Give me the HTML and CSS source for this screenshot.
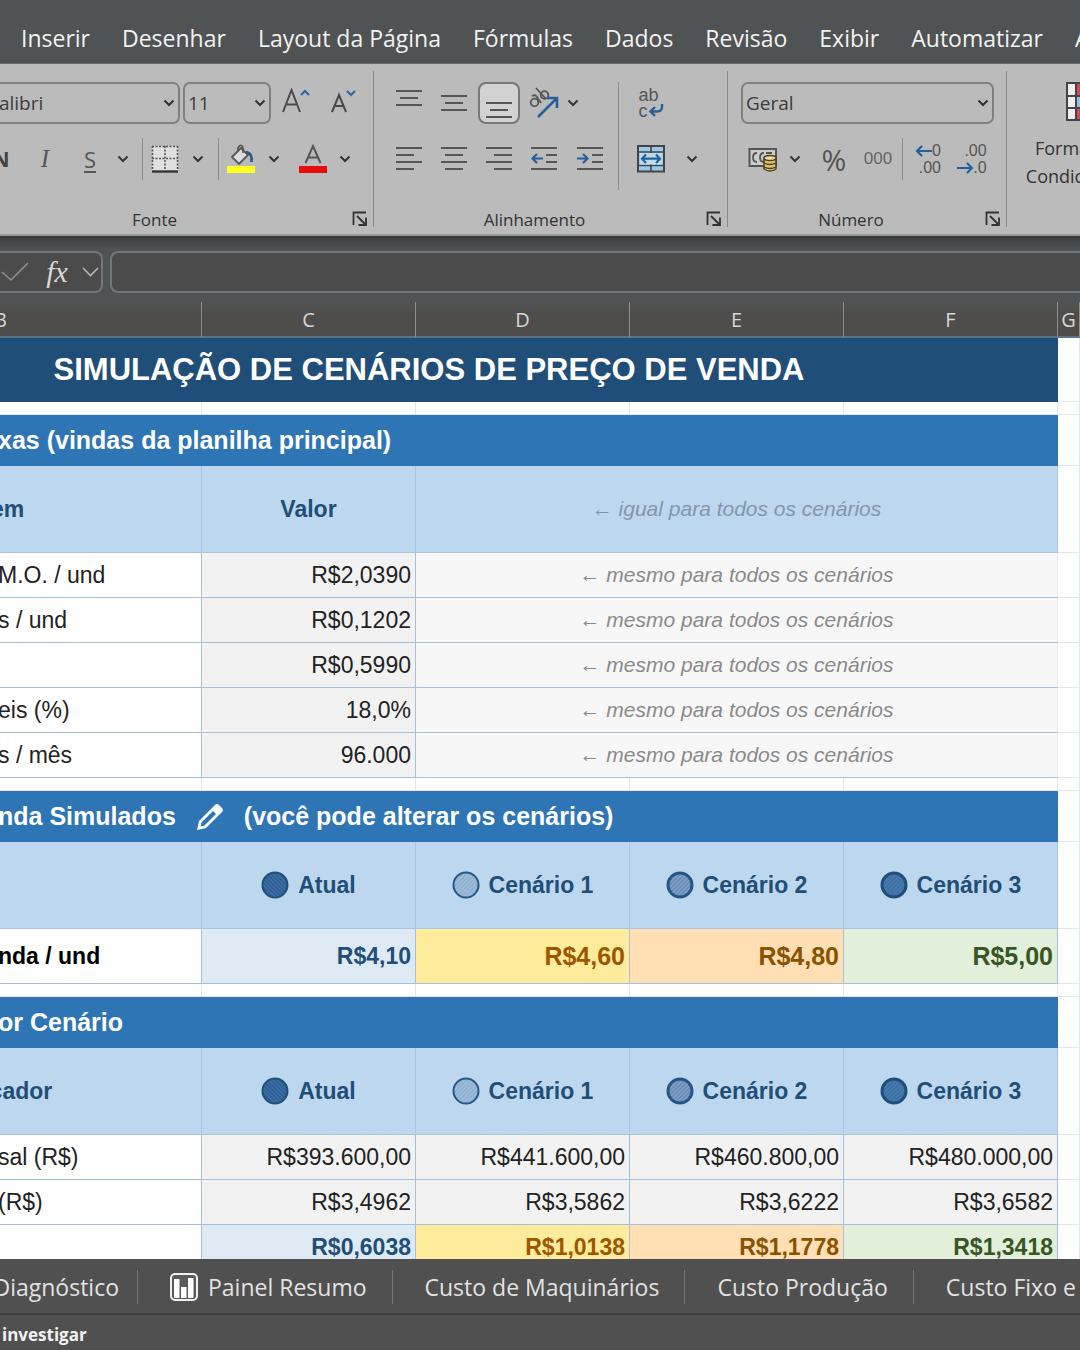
FILE: index.html
```html
<!DOCTYPE html>
<html lang="pt-BR">
<head>
<meta charset="utf-8">
<meta name="viewport" content="width=device-width, initial-scale=1">
<title>Simulação de Cenários</title>
<link rel="stylesheet" href="styles.css">
</head>
<body>
<svg class="defs" width="0" height="0" aria-hidden="true">
  <defs>
    <pattern id="hatch" width="3" height="3" patternUnits="userSpaceOnUse" patternTransform="rotate(45)"><path d="M0 0V3" stroke="#1f4e79" stroke-width="1" opacity=".55"/></pattern>
    <pattern id="hatch-back" width="3" height="3" patternUnits="userSpaceOnUse" patternTransform="rotate(-45)"><path d="M0 0V3" stroke="#8fb0d4" stroke-width="1" opacity=".5"/></pattern>
    <pattern id="hatch-light" width="3" height="3" patternUnits="userSpaceOnUse" patternTransform="rotate(45)"><path d="M0 0V3" stroke="#5c86b0" stroke-width="1" opacity=".5"/></pattern>
    <symbol id="chev" viewBox="0 0 12 8"><path d="M1.500 1.500L6 6L10.500 1.500" fill="none" stroke="currentColor" stroke-width="2"/></symbol>
    <symbol id="launch" viewBox="0 0 16 16"><path d="M1.500 14V1.500H14M5 5L13 13M14 6.500V14H6.500" fill="none" stroke="#333" stroke-width="1.800"/></symbol>
    <symbol id="c0" viewBox="0 0 28 28"><circle cx="14" cy="14" r="12.500" fill="#2d5f96"/><circle cx="14" cy="14" r="12.500" fill="url(#hatch-back)" stroke="#1f4e79" stroke-width="2"/></symbol>
    <symbol id="c1" viewBox="0 0 28 28"><circle cx="14" cy="14" r="12.500" fill="#9abbd8"/><circle cx="14" cy="14" r="12.500" fill="url(#hatch-light)" stroke="#265685" stroke-width="2"/></symbol>
    <symbol id="c2" viewBox="0 0 28 28"><circle cx="14" cy="14" r="12" fill="#7c9cc6"/><circle cx="14" cy="14" r="12" fill="url(#hatch)" stroke="#265685" stroke-width="3"/></symbol>
    <symbol id="c3" viewBox="0 0 28 28"><circle cx="14" cy="14" r="12" fill="#4579ab"/><circle cx="14" cy="14" r="12" fill="url(#hatch)" stroke="#1f4e79" stroke-width="3"/></symbol>
  </defs>
</svg>

<nav class="menu">
  <a href="#">Inserir</a><a href="#">Desenhar</a><a href="#">Layout da Página</a><a href="#">Fórmulas</a><a href="#">Dados</a><a href="#">Revisão</a><a href="#">Exibir</a><a href="#">Automatizar</a><a href="#">Ajuda</a>
</nav>

<div class="ribbon">
  <section class="group font">
    <div class="row">
      <div class="pick family"><select aria-label="Fonte"><option>Calibri</option></select><svg class="chev"><use href="#chev"/></svg></div>
      <div class="pick size"><select aria-label="Tamanho"><option>11</option></select><svg class="chev"><use href="#chev"/></svg></div>
      <button class="wide" aria-label="Aumentar fonte"><svg width="30" height="30"><path d="M2 24L10.500 2L19 24M5 16.500H16" fill="none" stroke="#4a4a4a" stroke-width="2"/><path d="M20 7L24 3L28 7" fill="none" stroke="#2a6aa8" stroke-width="2.200"/></svg></button>
      <button class="wide" aria-label="Diminuir fonte"><svg width="28" height="30"><path d="M3 24L10 7L17 24M5.500 18H14.500" fill="none" stroke="#4a4a4a" stroke-width="2"/><path d="M18 3L22 7L26 3" fill="none" stroke="#2a6aa8" stroke-width="2.200"/></svg></button>
    </div>
    <div class="tools font-tools">
      <button class="bold">N</button>
      <button class="italic">I</button>
      <button class="under">S</button>
      <button aria-label="Tipos de sublinhado"><svg class="chev"><use href="#chev"/></svg></button>
      <i class="sep"></i>
      <button aria-label="Bordas"><svg width="28" height="28"><path d="M1 1H27V26H1Z" fill="#e0e0e0"/><path d="M1 1.500H27M1.500 1V25M26.500 1V25M14 1V25M1 13.500H27" stroke="#555" stroke-width="1.600" stroke-dasharray="2 1.500"/><path d="M1 26.500H27" stroke="#333" stroke-width="2.400"/></svg></button>
      <button aria-label="Mais bordas"><svg class="chev"><use href="#chev"/></svg></button>
      <i class="sep"></i>
      <button aria-label="Cor de preenchimento"><svg width="30" height="30"><path d="M6 13L15 4L22 11L13 20Z" fill="#ddd" stroke="#555" stroke-width="1.800"/><path d="M12 7C11 2 16 -1 17 4V9" fill="none" stroke="#555" stroke-width="1.600"/><path d="M20 8C25 9 26 12 25.500 18" fill="none" stroke="#2c5a88" stroke-width="2.600"/><path d="M1 22H29V29H1Z" fill="#ff2"/></svg></button>
      <button aria-label="Mais cores"><svg class="chev"><use href="#chev"/></svg></button>
      <button aria-label="Cor da fonte"><svg width="30" height="30"><path d="M7.500 19L15 2L22.500 19M10 13.500H20" fill="none" stroke="#555" stroke-width="2"/><path d="M1 22H29V29H1Z" fill="#e80c0c"/></svg></button>
      <button aria-label="Mais cores da fonte"><svg class="chev"><use href="#chev"/></svg></button>
    </div>
    <footer><span>Fonte</span><button aria-label="Configurações de fonte"><svg width="16" height="16"><use href="#launch"/></svg></button></footer>
  </section>

  <section class="group align">
    <div class="blocks">
      <div class="block">
        <div class="tools align-tools">
          <button aria-label="Alinhar em cima"><svg class="lines" viewBox="0 0 26 30"><path d="M0 3H26M4 10H22M0 17H26"/></svg></button>
          <button aria-label="Alinhar no meio"><svg class="lines" viewBox="0 0 26 30"><path d="M0 8H26M4 15H22M0 22H26"/></svg></button>
          <button class="on" aria-label="Alinhar embaixo"><svg class="lines" viewBox="0 0 26 30"><path d="M0 15H26M4 22H22M0 29H26"/></svg></button>
          <button aria-label="Orientação"><svg width="32" height="32" viewBox="0 0 32 32"><g fill="none" stroke="#555" stroke-width="1.800"><circle cx="6.500" cy="15.500" r="3.800"/><path d="M4 9Q7 7 9 10L13 16"/><path d="M8 1L18 12"/><circle cx="16.500" cy="8" r="3.800"/></g><path d="M10 30L28 12M19 11H29V21" fill="none" stroke="#24619a" stroke-width="2.600"/></svg></button>
          <button aria-label="Mais orientações"><svg class="chev"><use href="#chev"/></svg></button>
        </div>
        <div class="tools align-tools">
          <button aria-label="Alinhar à esquerda"><svg class="lines" viewBox="0 0 26 30"><path d="M0 4H26M0 11H18M0 18H26M0 25H18"/></svg></button>
          <button aria-label="Centralizar"><svg class="lines" viewBox="0 0 26 30"><path d="M0 4H26M4 11H22M0 18H26M4 25H22"/></svg></button>
          <button aria-label="Alinhar à direita"><svg class="lines" viewBox="0 0 26 30"><path d="M0 4H26M8 11H26M0 18H26M8 25H26"/></svg></button>
          <button aria-label="Diminuir recuo"><svg class="lines" viewBox="0 0 26 30"><path d="M0 4H26M15 11H26M15 18H26M0 25H26"/><path class="blue" d="M12 14.500H2M6 10L1.500 14.500L6 19"/></svg></button>
          <button aria-label="Aumentar recuo"><svg class="lines" viewBox="0 0 26 30"><path d="M0 4H26M15 11H26M15 18H26M0 25H26"/><path class="blue" d="M0 14.500H10M6 10L10.500 14.500L6 19"/></svg></button>
        </div>
      </div>
      <i class="sep"></i>
      <div class="block">
        <div class="tools wrap-tools"><button class="wrap" aria-label="Quebrar texto"><span>ab</span><span>c<svg width="16" height="14"><path d="M14 0V3Q14 7.500 9 7.500H3M7 3L2.500 7.500L7 12" fill="none" stroke="#24619a" stroke-width="2.400"/></svg></span></button></div>
        <div class="tools wrap-tools">
          <button aria-label="Mesclar e centralizar"><svg width="28" height="28"><path d="M1 1H27V26.500H1Z" fill="#9cc9ea" stroke="#444" stroke-width="2"/><path d="M14 1V27M1 7H27M1 20.500H27" stroke="#444" stroke-width="1.600"/><path d="M3 8H25V19.500H3Z" fill="#b9dcf3"/><path d="M5 13.700H23M9 9.500L5 13.700L9 18M19 9.500L23 13.700L19 18" fill="none" stroke="#24619a" stroke-width="2.200"/></svg></button>
          <button aria-label="Mais opções de mesclagem"><svg class="chev"><use href="#chev"/></svg></button>
        </div>
      </div>
    </div>
    <footer><span>Alinhamento</span><button aria-label="Configurações de alinhamento"><svg width="16" height="16"><use href="#launch"/></svg></button></footer>
  </section>

  <section class="group number">
    <div class="pick format"><select aria-label="Formato de número"><option>Geral</option></select><svg class="chev"><use href="#chev"/></svg></div>
    <div class="tools number-tools">
      <button aria-label="Formato de contabilização"><svg width="30" height="28"><path d="M1.500 4H28V21H1.500Z" fill="#ccc" stroke="#555" stroke-width="2"/><path d="M9 8Q5 8 5 12.500T9 17M16 8Q12 8 12 12.500T16 17M18 8H24" fill="none" stroke="#555" stroke-width="1.800"/><path d="M16 13V24Q22 28 28 24V13Z" fill="#dfc06a" stroke="#4b4226" stroke-width="1.500"/><ellipse cx="22" cy="13" rx="6" ry="2.500" fill="#f0dc96" stroke="#4b4226" stroke-width="1.500"/><path d="M16 18Q22 21 28 18M16 22Q22 25 28 22" fill="none" stroke="#4b4226" stroke-width="1.300"/></svg></button>
      <button aria-label="Mais moedas"><svg class="chev"><use href="#chev"/></svg></button>
      <button class="percent">%</button>
      <button class="thousands">000</button>
      <i class="sep"></i>
      <button class="dec" aria-label="Aumentar casas decimais"><span><svg width="17" height="12"><path d="M17 6H2M7 1L2 6L7 11" fill="none" stroke="#24619a" stroke-width="2.200"/></svg>0</span><span>.00</span></button>
      <button class="dec" aria-label="Diminuir casas decimais"><span>.00</span><span><svg width="16" height="12"><path d="M0 6H15M10 1L15 6L10 11" fill="none" stroke="#24619a" stroke-width="2.200"/></svg>.0</span></button>
    </div>
    <footer><span>Número</span><button aria-label="Configurações de número"><svg width="16" height="16"><use href="#launch"/></svg></button></footer>
  </section>

  <section class="group style">
    <button class="conditional">
      <svg class="grid-icon" width="38" height="40"><path d="M1 1H37V38H1Z" fill="#eee"/><path d="M10 1H28V14H10ZM10 26H28V38H10Z" fill="#d9475a"/><path d="M10 14H24V26H10Z" fill="#8cc4ee"/><path d="M1 1H37V38H1ZM10 1V38M1 14H37M1 26H37M28 1V38" fill="none" stroke="#444" stroke-width="2"/></svg>
      <span>Formatação</span><span class="more">Condicional <svg class="chev"><use href="#chev"/></svg></span>
    </button>
  </section>
</div>

<div class="formula">
  <div class="fx">
    <button aria-label="Inserir"><svg width="28" height="20"><path d="M1 10L10 18L27 1" fill="none" stroke="#8f8f8f" stroke-width="1.600"/></svg></button>
    <button class="fn">fx</button>
    <button aria-label="Mais funções"><svg width="17" height="10"><path d="M1 1L8.500 8.500L16 1" fill="none" stroke="#b5b5b5" stroke-width="1.600"/></svg></button>
  </div>
  <input type="text" aria-label="Barra de fórmulas">
</div>

<main class="sheet">
<table>
  <colgroup><col class="col-b"><col class="col"><col class="col"><col class="col"><col class="col"><col></colgroup>
  <thead><tr><th>B</th><th>C</th><th>D</th><th>E</th><th>F</th><th>G</th></tr></thead>
  <tbody>
    <tr class="title"><th colspan="5">SIMULAÇÃO DE CENÁRIOS DE PREÇO DE VENDA</th><td></td></tr>
    <tr class="gap"><td></td><td></td><td></td><td></td><td></td><td></td></tr>
    <tr class="band"><th colspan="5">xas (vindas da planilha principal)</th><td></td></tr>
    <tr class="heads"><th>Item</th><th>Valor</th><td class="note" colspan="3">← igual para todos os cenários</td><td></td></tr>
    <tr class="line"><th>M.O. / und</th><td>R$2,0390</td><td class="note" colspan="3">← mesmo para todos os cenários</td><td></td></tr>
    <tr class="line"><th>s / und</th><td>R$0,1202</td><td class="note" colspan="3">← mesmo para todos os cenários</td><td></td></tr>
    <tr class="line"><th></th><td>R$0,5990</td><td class="note" colspan="3">← mesmo para todos os cenários</td><td></td></tr>
    <tr class="line"><th>eis (%)</th><td>18,0%</td><td class="note" colspan="3">← mesmo para todos os cenários</td><td></td></tr>
    <tr class="line"><th>s / mês</th><td>96.000</td><td class="note" colspan="3">← mesmo para todos os cenários</td><td></td></tr>
    <tr class="gap"><td></td><td></td><td></td><td></td><td></td><td></td></tr>
    <tr class="band"><th colspan="5"><span class="label">nda Simulados <svg width="30" height="30"><path d="M2 28L4 19L20 3Q22 1 24.500 3.500L26.500 5.500Q29 8 27 10L11 26Z" fill="#fff"/><path d="M6.500 20.500L18 9L21 12L9.500 23.500L5.500 24.500Z" fill="#2e75b6"/></svg> (você pode alterar os cenários)</span></th><td></td></tr>
    <tr class="heads"><th></th><th><span class="tag"><svg><use href="#c0"/></svg>Atual</span></th><th><span class="tag"><svg><use href="#c1"/></svg>Cenário 1</span></th><th><span class="tag"><svg><use href="#c2"/></svg>Cenário 2</span></th><th><span class="tag"><svg><use href="#c3"/></svg>Cenário 3</span></th><td></td></tr>
    <tr class="line price"><th>nda / und</th><td class="now">R$4,10</td><td class="one">R$4,60</td><td class="two">R$4,80</td><td class="three">R$5,00</td><td></td></tr>
    <tr class="gap"><td></td><td></td><td></td><td></td><td></td><td></td></tr>
    <tr class="band"><th colspan="5">or Cenário</th><td></td></tr>
    <tr class="heads"><th>Indicador</th><th><span class="tag"><svg><use href="#c0"/></svg>Atual</span></th><th><span class="tag"><svg><use href="#c1"/></svg>Cenário 1</span></th><th><span class="tag"><svg><use href="#c2"/></svg>Cenário 2</span></th><th><span class="tag"><svg><use href="#c3"/></svg>Cenário 3</span></th><td></td></tr>
    <tr class="line"><th>sal (R$)</th><td>R$393.600,00</td><td>R$441.600,00</td><td>R$460.800,00</td><td>R$480.000,00</td><td></td></tr>
    <tr class="line"><th>(R$)</th><td>R$3,4962</td><td>R$3,5862</td><td>R$3,6222</td><td>R$3,6582</td><td></td></tr>
    <tr class="line"><th></th><td class="now">R$0,6038</td><td class="one">R$1,0138</td><td class="two">R$1,1778</td><td class="three">R$1,3418</td><td></td></tr>
  </tbody>
</table>
</main>

<nav class="tabs">
  <button class="first">Diagnóstico</button>
  <button><svg width="28" height="28"><rect x="1" y="1" width="26" height="26" rx="4" fill="#5a5a5a" stroke="#f0f0f0" stroke-width="2"/><path d="M4 6H9.500V25H4ZM11 14H16.500V25H11ZM18 5H23.500V25H18Z" fill="#fff"/></svg>Painel Resumo</button>
  <button>Custo de Maquinários</button>
  <button>Custo Produção</button>
  <button>Custo Fixo e</button>
</nav>
<div class="status">investigar</div>
</body>
</html>
```

FILE: styles.css
```css
* { box-sizing: border-box; }

body {
  margin: 0;
  height: 100vh;
  display: flex;
  flex-direction: column;
  overflow: hidden;
  background: #505354;
  color: #333;
  font-family: "Open Sans", "Noto Sans", sans-serif;
}

button {
  display: flex;
  align-items: center;
  justify-content: center;
  padding: 0;
  border: 0;
  background: none;
  color: inherit;
  font: inherit;
  white-space: nowrap;
}

svg { display: block; flex: none; }
.defs { position: absolute; }
.chev { width: 12px; height: 8px; color: #333; }

/* Menu */
.menu {
  flex: none;
  display: flex;
  align-items: center;
  gap: 32px;
  height: 64px;
  padding: 13px 0 0 21px;
  overflow: hidden;
  background: #505354;
  border-bottom: 1px solid #6c6f70;
  font-size: 23px;
}
.menu a { color: #f2f2f2; text-decoration: none; white-space: nowrap; }

/* Ribbon */
.ribbon {
  flex: none;
  display: flex;
  height: 172px;
  padding-top: 7px;
  overflow: hidden;
  background: #bbbbbb;
  border-bottom: 2px solid #9a9c9c;
}
.group {
  flex: none;
  display: flex;
  flex-direction: column;
  height: 156px;
  padding-top: 11px;
  border-right: 1px solid #8c8c8c;
}
.font { width: 406px; margin-left: -32px; }
.align { width: 354px; }
.number { width: 279px; }
.style { border: 0; }

.row { display: flex; height: 42px; margin-bottom: 14px; gap: 3px; }
.pick {
  display: grid;
  align-items: center;
  height: 42px;
  border: 2px solid #808080;
  border-radius: 7px;
}
.pick select {
  grid-area: 1 / 1;
  width: 100%;
  height: 100%;
  padding: 0 0 0 3px;
  border: 0;
  appearance: none;
  background: none;
  color: #3c3c3c;
  font: 19px "Open Sans", "Noto Sans", sans-serif;
}
.pick .chev { grid-area: 1 / 1; justify-self: end; margin-right: 3px; pointer-events: none; }
.family { width: 212px; }
.family select { padding-left: 17px; }
.size { width: 88px; }
.format { width: 253px; margin: 0 0 14px 13px; }
.wide { width: 44px; }

.tools { display: grid; height: 42px; align-items: center; justify-items: center; }
.sep { width: 1px; height: 42px; background: #8c8c8c; }
.font-tools { grid-template-columns: 44px 44px 46px 20px 18px 28px 38px 2px 44px 22px 56px 8px; padding-left: 11px; }
.bold { font-size: 21px; font-weight: 700; color: #444; }
.italic { font: italic 25px "Liberation Serif", serif; color: #555; }
.under { font-size: 22px; color: #555; text-decoration: underline; text-decoration-thickness: 2px; text-underline-offset: 3px; }

.blocks { display: flex; gap: 6px; padding-left: 13px; }
.blocks > .sep { height: 108px; }
.block { display: flex; flex-direction: column; gap: 14px; }
.align-tools { grid-template-columns: 44px 45px 45px 46px 45px; }
.align-tools > :nth-child(5):has(.chev) { justify-self: start; }
.lines { width: 26px; height: 30px; fill: none; stroke: #555; stroke-width: 2; overflow: visible; }
.lines .blue { stroke: #24619a; stroke-width: 2.200; }
.on { width: 42px; height: 42px; border: 2px solid #777; border-radius: 8px; background: #d2d2d2; }
.wrap-tools { grid-template-columns: 52px 30px; }
.wrap { flex-direction: column; align-items: flex-start; font: 18px/16px "Liberation Sans", sans-serif; color: #555; }
.wrap span { display: flex; align-items: center; height: 16px; }

.number-tools { grid-template-columns: 44px 20px 58px 30px 18px 34px 54px; padding-left: 13px; }
.percent { font-size: 30px; color: #555; }
.thousands { font: 17px "Liberation Sans", sans-serif; color: #666; }
.dec { flex-direction: column; align-items: flex-end; font: 16px/17px "Liberation Sans", sans-serif; color: #555; }
.dec span { display: flex; align-items: center; }

.group footer { display: flex; align-items: center; height: 28px; margin-top: auto; font-size: 17px; }
.blocks + footer, .tools + footer { margin-bottom: -6px; }
.group footer span { flex: 1; text-align: center; }
.group footer button { width: 32px; justify-content: flex-end; padding-right: 5px; }

.conditional { flex-direction: column; width: 156px; font-size: 18px; line-height: 28px; }
.grid-icon { margin-bottom: 12px; }
.more { display: flex; align-items: center; gap: 8px; }

/* Formula bar */
.formula {
  flex: none;
  display: flex;
  gap: 7px;
  height: 66px;
  padding: 15px 0 9px;
  overflow: hidden;
  background: linear-gradient(#3a3c3c, #505354 14px);
}
.fx {
  display: grid;
  grid-template-columns: 36px 48px 18px;
  justify-content: end;
  width: 103px;
  padding-right: 2px;
  border: 2px solid #737676;
  border-left: 0;
  border-radius: 0 8px 8px 0;
  background: #4b4b4b;
}
.fn { font: italic 30px "Liberation Serif", serif; color: #d8d8d8; }
.formula input {
  flex: 1;
  margin-right: -10px;
  padding: 0 12px;
  border: 2px solid #737676;
  border-radius: 8px;
  background: #4b4b4b;
  color: #fff;
  font: 20px "Open Sans", sans-serif;
}

/* Sheet */
.sheet { flex: 1; min-height: 0; overflow: hidden; background: #fff; }
table {
  table-layout: fixed;
  width: calc(100% + 200px);
  margin-left: -200px;
  border-collapse: separate;
  border-spacing: 0;
  font: 23px "Liberation Sans", Arial, sans-serif;
}
.col-b { width: 402px; }
.col { width: 214px; }
th, td { padding: 0; white-space: nowrap; border: solid #e3e6ea; border-width: 0 1px 1px 0; }

thead th {
  height: 36px;
  padding-top: 2px;
  background: linear-gradient(#525454, #4e4d4c 10px);
  border-color: #8e8e8e;
  border-bottom: 2px solid #5c7088;
  color: #d6d6d6;
  font: 20px/30px "Open Sans", "Noto Sans", sans-serif;
}
.title th { height: 64px; background: #1f4e79; border: 0; color: #fff; font-size: 31px; }
.gap td { height: 13px; }
.band th {
  height: 51px;
  padding-left: 198px;
  background: #2e75b6;
  border: 0;
  color: #fff;
  font-size: 25px;
  text-align: left;
}
.label { display: flex; align-items: center; gap: 19px; }
.heads th, .heads td { height: 87px; }
.heads th, .heads .note { background: #bdd7ee; border-color: #a8c6e4; color: #1f4e79; }
.tag { display: flex; align-items: center; justify-content: center; gap: 9px; }
.tag svg { width: 28px; height: 28px; }
.note { text-align: center; font-size: 21px; font-style: italic; }
.heads .note { color: #8496a9; }

.line th, .line td { height: 45px; border-color: #a3c0de; }
.line th { padding-left: 198px; font-weight: 400; text-align: left; color: #222; }
.line td { padding-right: 4px; background: #f2f2f2; color: #222; text-align: right; }
.line .note { padding: 0; background: #f7f7f7; border-right-color: #e8edf3; color: #8a8a8a; text-align: center; }
tbody tr td:last-child { background: #fff; border-color: #e3e6ea; }

.price th, .price td { height: 55px; font-weight: 700; font-size: 25px; }
.price th, .price .now { font-size: 23px; }
.price th { color: #000; }
.line .now, .line .one, .line .two, .line .three { font-weight: 700; }
.line .now { background: #deeaf3; color: #1f4e79; }
.line .one { background: #ffeb9c; color: #9c5700; }
.line .two { background: #ffdfb3; color: #8a5200; }
.line .three { background: #e2efda; color: #375623; }

/* Sheet tabs and status */
.tabs {
  flex: none;
  display: flex;
  align-items: center;
  height: 56px;
  padding-top: 2px;
  overflow: hidden;
  background: #505050;
  border-bottom: 2px solid #3e3e3e;
  color: #e2e2e2;
  font-size: 23px;
}
.tabs button { flex: none; gap: 10px; height: 34px; padding: 0 25px 0 32px; border-right: 1px solid #777; }
.tabs .first { width: 138px; justify-content: flex-end; padding: 0 18px 0 0; }
.tabs button:last-child { border: 0; }
.status {
  flex: none;
  height: 35px;
  padding-left: 2px;
  background: #505050;
  color: #f2f2f2;
  font-size: 17px;
  font-weight: 700;
  line-height: 40px;
}
```
